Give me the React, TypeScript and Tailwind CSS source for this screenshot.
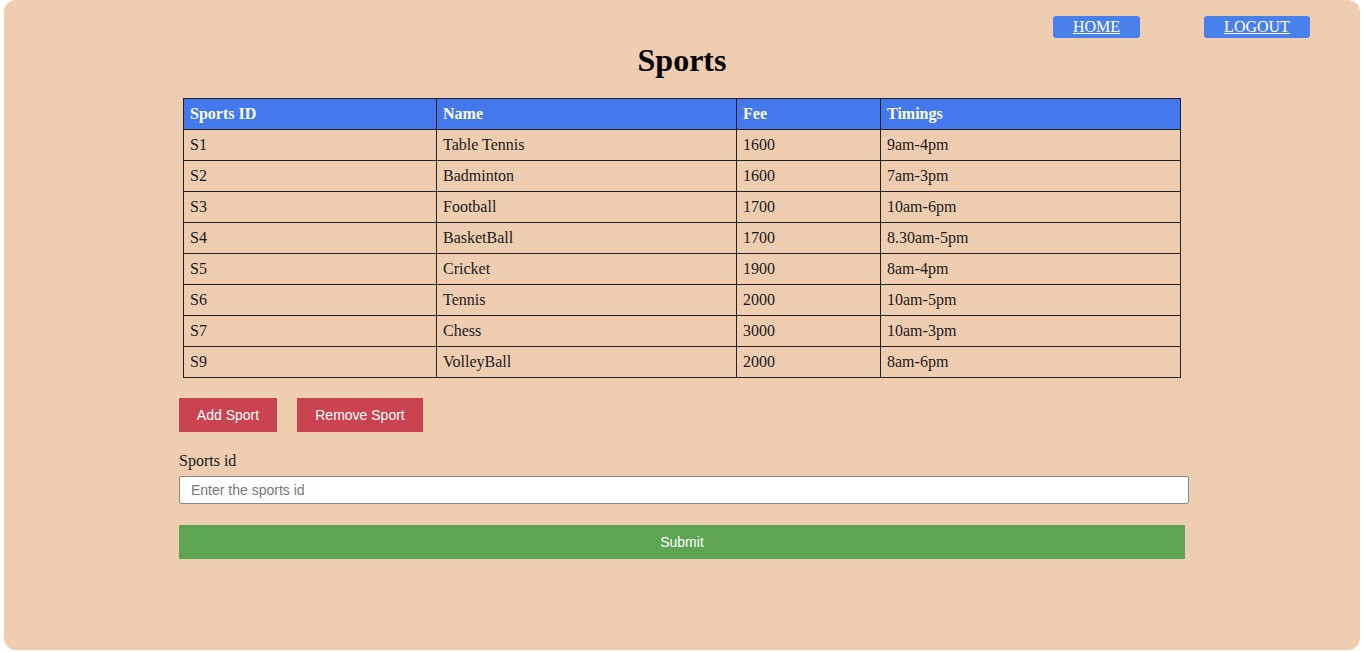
import React from "react";

const sports = [
  { id: "S1", name: "Table Tennis", fee: "1600", time: "9am-4pm" },
  { id: "S2", name: "Badminton", fee: "1600", time: "7am-3pm" },
  { id: "S3", name: "Football", fee: "1700", time: "10am-6pm" },
  { id: "S4", name: "BasketBall", fee: "1700", time: "8.30am-5pm" },
  { id: "S5", name: "Cricket", fee: "1900", time: "8am-4pm" },
  { id: "S6", name: "Tennis", fee: "2000", time: "10am-5pm" },
  { id: "S7", name: "Chess", fee: "3000", time: "10am-3pm" },
  { id: "S9", name: "VolleyBall", fee: "2000", time: "8am-6pm" },
];

export default function App() {
  return (
    <div className="h-[652px] w-[1364px] bg-white pl-[4px] pr-[4px] font-['Liberation_Serif',serif] text-[#1a1a1a]">
      <div className="h-[650px] rounded-[12px] bg-[#efcdb1] pt-[16px]">
        {/* top nav */}
        <nav className="flex justify-end gap-[64px] pr-[50px]">
          <a href="#" className="flex h-[22px] w-[87px] items-center justify-center rounded-[3px] bg-[#4a80ec] text-[16px] text-white underline">
            HOME
          </a>
          <a href="#" className="flex h-[22px] w-[106px] items-center justify-center rounded-[3px] bg-[#4a80ec] text-[16px] text-white underline">
            LOGOUT
          </a>
        </nav>

        <h1 className="mt-[4px] mb-[19px] text-center text-[32px] font-bold leading-[37px] text-black">
          Sports
        </h1>

        <table className="mx-auto w-[998px] border-collapse text-left text-[16px]">
          <thead>
            <tr className="h-[31px] bg-[#4479ed] text-white">
              <th className="w-[253px] border border-[#222] px-[6px] font-bold">Sports ID</th>
              <th className="w-[300px] border border-[#222] px-[6px] font-bold">Name</th>
              <th className="w-[144px] border border-[#222] px-[6px] font-bold">Fee</th>
              <th className="border border-[#222] px-[6px] font-bold">Timings</th>
            </tr>
          </thead>
          <tbody>
            {sports.map((s) => (
              <tr key={s.id} className="h-[31px]">
                <td className="border border-[#222] px-[6px]">{s.id}</td>
                <td className="border border-[#222] px-[6px]">{s.name}</td>
                <td className="border border-[#222] px-[6px]">{s.fee}</td>
                <td className="border border-[#222] px-[6px]">{s.time}</td>
              </tr>
            ))}
          </tbody>
        </table>

        <div className="ml-[175px] w-[1010px]">
          <div className="mt-[20px] flex gap-[20px] font-['Liberation_Sans',sans-serif] text-[14px] text-white">
            <button className="h-[34px] w-[98px] bg-[#c9444f]">Add Sport</button>
            <button className="h-[34px] w-[126px] bg-[#c9444f]">Remove Sport</button>
          </div>

          <label className="mt-[20px] block text-[16px] leading-[18px]">Sports id</label>
          <input
            placeholder="Enter the sports id"
            className="mt-[6px] block h-[28px] w-[1010px] rounded-[2px] border border-[#8a8a8a] bg-white px-[11px] font-['Liberation_Sans',sans-serif] text-[14px] placeholder:text-[#777]"
          />

          <button className="mt-[21px] block h-[34px] w-[1006px] bg-[#5da553] font-['Liberation_Sans',sans-serif] text-[14px] text-white">
            Submit
          </button>
        </div>
      </div>
    </div>
  );
}
